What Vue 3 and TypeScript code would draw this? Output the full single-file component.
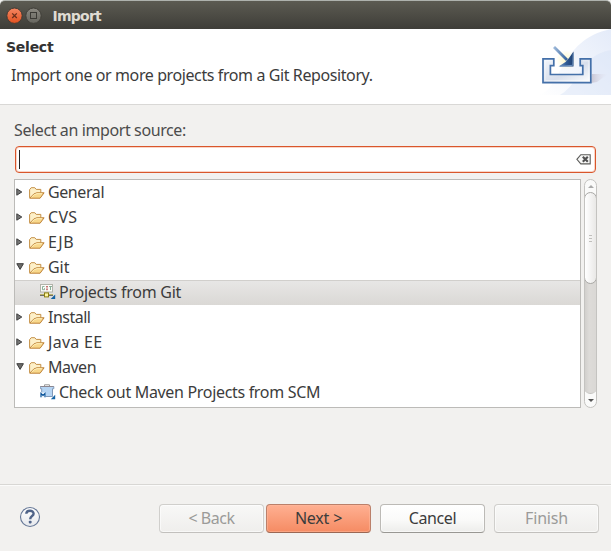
<script setup lang="ts">
import { ref } from 'vue'

type Icon = 'folder' | 'git' | 'maven'
interface Row { label: string; icon: Icon; open?: boolean; child?: boolean; fit: string }

const rows: Row[] = [
  { label: 'General', icon: 'folder', fit: 'general' },
  { label: 'CVS', icon: 'folder', fit: 'cvs' },
  { label: 'EJB', icon: 'folder', fit: 'ejb' },
  { label: 'Git', icon: 'folder', open: true, fit: 'git' },
  { label: 'Projects from Git', icon: 'git', child: true, fit: 'projects' },
  { label: 'Install', icon: 'folder', fit: 'install' },
  { label: 'Java EE', icon: 'folder', fit: 'java' },
  { label: 'Maven', icon: 'folder', open: true, fit: 'maven' },
  { label: 'Check out Maven Projects from SCM', icon: 'maven', child: true, fit: 'scm' },
]
const selected = ref(4)
</script>

<template>
  <div class="window">
    <header class="titlebar">
      <svg class="controls" width="36" height="18" viewBox="0 0 36 18">
        <defs>
          <linearGradient id="closeFill" x2="0" y2="1"><stop stop-color="#f58763" /><stop offset="1" stop-color="#e3511f" /></linearGradient>
          <linearGradient id="maxFill" x2="0" y2="1"><stop stop-color="#8b8981" /><stop offset="1" stop-color="#67665f" /></linearGradient>
        </defs>
        <circle cx="8.5" cy="8.7" r="7.7" fill="url(#closeFill)" stroke="#403a33" />
        <path d="M6.2 6.4l4.6 4.6M10.8 6.4l-4.6 4.6" stroke="#6b2f1b" stroke-width="1.3" />
        <circle cx="27.5" cy="8.7" r="7.7" fill="url(#maxFill)" stroke="#403e38" />
        <rect x="24.5" y="5.5" width="6" height="6" fill="none" stroke="#3b3a35" />
      </svg>
      <span class="title">Import</span>
    </header>

    <section class="banner">
      <div class="intro">
        <h1><span>Select</span></h1>
        <p><span class="message">Import one or more projects from a Git Repository.</span></p>
      </div>
      <svg class="art" width="75" height="66" viewBox="536 29 75 66">
        <defs>
          <linearGradient id="swoosh" x1="0" y1="1" x2="1" y2="0"><stop stop-color="#fff" /><stop offset="1" stop-color="#e4ebf9" /></linearGradient>
          <linearGradient id="tray" x2="1" y2="1"><stop stop-color="#f1f5fb" /><stop offset=".55" stop-color="#d8dfec" /><stop offset="1" stop-color="#fff" /></linearGradient>
          <radialGradient id="glow"><stop stop-color="#fff9c8" /><stop offset="1" stop-color="#fff9c8" stop-opacity="0" /></radialGradient>
          <linearGradient id="shade"><stop stop-color="#a99dab" stop-opacity=".5" /><stop offset="1" stop-color="#e4dbe6" stop-opacity="0" /></linearGradient>
          <linearGradient id="shaft"><stop stop-color="#9db9da" /><stop offset="1" stop-color="#34619c" /></linearGradient>
          <linearGradient id="head"><stop stop-color="#7ea2ca" /><stop offset=".5" stop-color="#305c96" /><stop offset="1" stop-color="#1f3f70" /></linearGradient>
        </defs>
        <path d="M538 95C562 91 558 40 611 29V95z" fill="url(#swoosh)" />
        <path d="M560 95C580 84 580 55 611 50V95z" fill="#d8e3f7" opacity=".45" />
        <path d="M591 83L592 74L608 74L597 82z" fill="url(#shade)" />
        <circle cx="566" cy="60" r="10" fill="url(#glow)" />
        <path d="M543 58.9h10.8v6.8h-3.4v8.8h32.4v-8.8h-2.6v-6.8h10.6v23.8H543z" fill="url(#tray)" stroke="#4470a9" stroke-width="1.7" />
        <path d="M545 81V60.8h6.5M583 60.8h5.8V80.5H545.5" fill="none" stroke="#fff" stroke-opacity=".45" />
        <path d="M554 47l13 13" stroke="url(#shaft)" stroke-width="2.8" />
        <path d="M573.5 51.5v15h-15l7-4.5 3.5-4z" fill="url(#head)" />
        <path d="M560 66.3l12.8-1 .4-12" fill="none" stroke="#6e93c1" />
      </svg>
    </section>

    <main>
      <label class="prompt"><span>Select an import source:</span></label>
      <div class="filter">
        <i class="caret"></i>
        <svg width="15" height="11" viewBox="0 0 15 11">
          <path d="M4.8.7h9.4v9.2H4.8L.9 5.3z" fill="#f8f8f7" stroke="#5c5c5a" stroke-width="1.1" />
          <path d="M6.8 2.8l5 5M11.8 2.8l-5 5" stroke="#505050" stroke-width="2.1" />
        </svg>
      </div>

      <div class="browser">
        <ul class="tree">
          <li v-for="(row, i) in rows" :key="row.label" :class="{ child: row.child, selected: selected === i }" @click="selected = i">
            <svg v-if="!row.child" class="twisty" width="9" height="10" viewBox="0 0 9 10">
              <path v-if="row.open" d="M.8 1.7h6.6L4.1 7.4z" fill="#6d6d6b" stroke="#3c3c3c" />
              <path v-else d="M.8 1.8v6.4l5-3.2z" fill="#777" stroke="#414141" />
            </svg>
            <svg v-if="row.icon === 'folder'" class="folder" width="16" height="12" viewBox="0 0 16 12">
              <path d="M.6 10.8V2.6L2.2.7h3.6l1.4 1.7h4.6v3.2" fill="#fdf0c9" stroke="#c48f45" />
              <path d="M.7 11.2L4.8 7l3-1.2h7.3l-4 5.4z" fill="#f8d88c" stroke="#bd8036" />
              <path d="M2.5 10.2L5.2 7.7l2.8-1h5" fill="none" stroke="#fff0be" />
            </svg>
            <svg v-else-if="row.icon === 'git'" class="item" width="16" height="16" viewBox="0 0 16 16">
              <rect x=".5" y=".5" width="12" height="7.5" fill="#fbfbf8" stroke="#b3b3aa" />
              <path d="M4.5 2.5h-2v3.2h2V4.2M9 2.5h3M10.5 2.5V6" fill="none" stroke="#7fa890" stroke-width=".9" />
              <path d="M6 2.5h2M7 2.5v3.2M6 5.7h2" fill="none" stroke="#c3666a" stroke-width=".9" />
              <path d="M0 11.5h13" stroke="#6c6c64" />
              <path d="M0 10.5h13" stroke="#b9b26a" />
              <rect x="4.5" y="8.9" width="4" height="4" fill="#fff7a0" stroke="#8b7e12" />
              <path d="M15.2 10.5v4.5h-4.5z" fill="#1463a5" />
            </svg>
            <svg v-else class="item" width="16" height="16" viewBox="0 0 16 16">
              <path d="M4.5 2.5V.8h5v1.7" fill="none" stroke="#979797" />
              <path d="M.3 2.5h13.5v2.2h-1.3v7.8H1.7V4.7H.3z" fill="#b5d4f3" stroke="#8199b8" />
              <path d="M.5 2.5h13" stroke="#8d8790" />
              <path d="M0 8.5h6v5.2H0z" fill="#f4f8fc" />
              <path d="M1 13.3V9.5l2 2 2-2v3.8" fill="none" stroke="#07529a" stroke-width="1.2" />
              <path d="M15.2 10.8v4.4h-4.4z" fill="#1463a5" />
            </svg>
            <span :class="['label', row.fit]">{{ row.label }}</span>
          </li>
        </ul>
        <div class="scrollbar">
          <i class="arrow up"></i>
          <div class="thumb"><i></i><i></i><i></i></div>
          <div class="trough"></div>
          <i class="arrow down"></i>
        </div>
      </div>
    </main>

    <footer>
      <svg class="help" width="22" height="22" viewBox="0 0 22 22">
        <defs><linearGradient id="helpFill" x2="0" y2="1"><stop stop-color="#fff" /><stop offset="1" stop-color="#e6e8ec" /></linearGradient></defs>
        <circle cx="11" cy="11" r="9.5" fill="url(#helpFill)" stroke="#667897" stroke-width="1.1" />
        <path d="M7.3 7.8C7.4 3.7 14.6 3.7 14.6 7.7C14.6 10.2 11.2 9.8 11.2 13.2" fill="none" stroke="#506489" stroke-width="2.4" />
        <rect x="9.8" y="14.7" width="2.8" height="2.7" rx=".8" fill="#506489" />
      </svg>
      <button class="disabled" disabled><span class="back">&lt; Back</span></button>
      <button class="primary"><span class="next">Next &gt;</span></button>
      <button class="cancel"><span>Cancel</span></button>
      <button class="disabled" disabled><span class="finish">Finish</span></button>
    </footer>
  </div>
</template>

<style>
body { background: #f2f1ef; overflow: hidden; }
</style>

<style scoped>
* { box-sizing: border-box; }
.window { width: 611px; height: 551px; display: flex; flex-direction: column; background: #f2f1ef; color: #3c3c3c; font: 16px/20px "Noto Sans", "Open Sans", sans-serif; white-space: nowrap; overflow: hidden; }
.titlebar { height: 29px; flex: none; display: flex; padding: 5px 0 0 6px; border-top: 1px solid #aeb2ad; border-radius: 5px 5px 0 0; background: linear-gradient(#5c5b52, #3e3d38); color: #dfdbd2; }
.controls { margin-top: 1px; }
.title { font: 700 14px/20px "DejaVu Sans", sans-serif; margin-left: 10.5px; letter-spacing: -.75px; }
.banner { height: 76px; flex: none; display: flex; justify-content: space-between; align-items: flex-start; background: #fff; border-bottom: 1px solid #d9d8d6; }
.intro { padding: 8px 0 0 6px; }
h1 { font: 700 14px/20px "DejaVu Sans", sans-serif; margin: 0; color: #333; letter-spacing: -.25px; }
p { margin: 8px 0 0 5px; }
.message { letter-spacing: -.4px; }
main { height: 379px; flex: none; padding: 15px 0 0 14px; }
.prompt { display: block; height: 26px; color: #4c4c4c; }
.prompt span { letter-spacing: -.39px; }
.filter { width: 581px; height: 27px; margin-left: 1px; border: 1px solid #d9562b; border-radius: 4px; box-shadow: inset 0 0 0 1px #f9d5c7; background: #fff; display: flex; align-items: center; justify-content: space-between; padding: 0 4px 0 3px; }
.caret { width: 1px; height: 19px; background: #222; }
.browser { display: flex; margin-top: 6px; gap: 3px; }
.tree { width: 567px; height: 229px; margin: 0; padding: 0; list-style: none; border: 1px solid #bcbbb8; background: #fff; overflow: hidden; }
li { height: 25px; display: flex; align-items: center; padding-left: 1px; }
.child { padding-left: 25px; }
.selected { background: linear-gradient(#e8e7e6, #dad8d5); box-shadow: inset 0 1px #d1cfcc; }
.twisty { width: 9px; flex: none; margin-bottom: 2px; }
.folder { margin: 0 3px 0 4px; flex: none; }
.item { margin: 0 3px 1px 0; flex: none; }
.label { line-height: 20px; margin-bottom: 2px; letter-spacing: -.4px; }
.cvs { letter-spacing: .3px; }
.ejb { letter-spacing: .5px; }
.git { letter-spacing: -.05px; }
.projects { letter-spacing: -.24px; }
.install { letter-spacing: -.5px; }
.java { letter-spacing: .3px; }
.maven { letter-spacing: -.5px; }
.scm { letter-spacing: -.32px; }
.scrollbar { width: 13px; height: 229px; border: 1px solid #c4c3c0; border-radius: 7px; display: flex; flex-direction: column; align-items: center; background: #fafaf9; overflow: hidden; }
.arrow { height: 12px; width: 11px; flex: none; display: flex; align-items: center; justify-content: center; }
.arrow::after { content: ''; border: 3px solid transparent; }
.up::after { border-bottom-color: #aaa; border-top: 0; }
.down { height: 13px; }
.down::after { border-top-color: #555; border-bottom: 0; }
.thumb { width: 13px; height: 92px; flex: none; border: 1px solid #a9a8a5; border-radius: 7px; background: linear-gradient(90deg, #fff, #e9e8e6); display: flex; flex-direction: column; align-items: center; justify-content: center; gap: 2px; z-index: 1; }
.thumb i { width: 3px; height: 1px; background: #c0bfbc; }
.trough { width: 13px; flex: 1; margin-top: -8px; background: linear-gradient(90deg, #cfcdca, #dddbd8 40%, #d9d7d4); border-bottom: 1px solid #c4c3c0; border-radius: 0 0 7px 7px; }
footer { height: 67px; flex: none; display: flex; align-items: flex-start; padding: 19px 0 0 19px; border-top: 1px solid #d8d7d4; box-shadow: inset 0 1px #fbfbfa; }
.help { margin: 2px 118px 0 0; flex: none; }
button { width: 105px; height: 29px; flex: none; padding: 0; border: 1px solid #bcbab6; border-bottom-color: #999793; border-radius: 4px; background: linear-gradient(#fff, #fafaf9 55%, #ededeb); box-shadow: inset 0 0 0 1px #ffffff90; color: #3c3c3c; font: inherit; line-height: 25px; }
button span { letter-spacing: -.4px; }
button .back { letter-spacing: -.5px; }
button .next { letter-spacing: -.2px; }
button .finish { letter-spacing: -.2px; }
.disabled { background: linear-gradient(#f8f8f7, #efeeec); border-color: #d0cfcc; border-bottom-color: #c2c0bd; color: #9b9b99; }
.primary { margin-left: 2px; background: linear-gradient(#ffb092, #f58b63); border-color: #bb806a; border-bottom-color: #9b6753; box-shadow: inset 0 0 0 1px #ffbca080; }
.cancel, .cancel + button { margin-left: 9px; }
</style>
